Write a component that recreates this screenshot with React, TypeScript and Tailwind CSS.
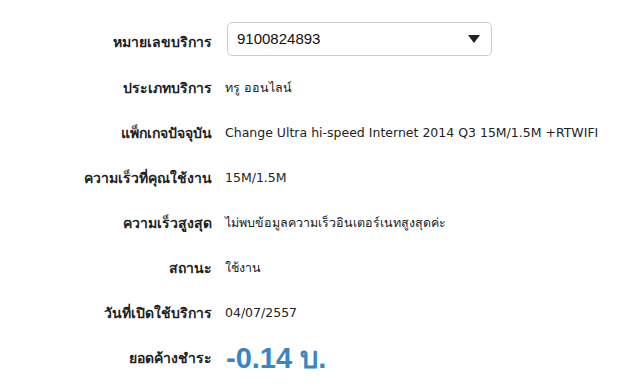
const rows: { label: string; value: string }[] = [
  { label: "ประเภทบริการ", value: "ทรู ออนไลน์" },
  { label: "แพ็กเกจปัจจุบัน", value: "Change Ultra hi-speed Internet 2014 Q3 15M/1.5M +RTWIFI" },
  { label: "ความเร็วที่คุณใช้งาน", value: "15M/1.5M" },
  { label: "ความเร็วสูงสุด", value: "ไม่พบข้อมูลความเร็วอินเตอร์เนทสูงสุดค่ะ" },
  { label: "สถานะ", value: "ใช้งาน" },
  { label: "วันที่เปิดใช้บริการ", value: "04/07/2557" },
];

export default function App() {
  return (
    <div className="w-[637px] h-[390px] bg-white text-[12.5px] text-[#222] font-['Tahoma','DejaVu_Sans',sans-serif] pt-[22px]">
      <div className="flex items-center h-[34px]">
        <div className="w-[212px] text-right font-bold text-[14px] pt-[6px]">หมายเลขบริการ</div>
        <div className="ml-[15px] w-[265px] h-[34px] border border-[#ccc] rounded-[5px] flex items-center justify-between pl-[9px] pr-[11px] font-['Liberation_Sans',sans-serif] text-[15px] text-[#111]">
          <span>9100824893</span>
          <svg width="12" height="8" viewBox="0 0 12 8">
            <path d="M0 0 H12 L6 8 Z" fill="#222" />
          </svg>
        </div>
      </div>
      <div className="mt-[10px]">
        {rows.map((r) => (
          <div key={r.label} className="flex items-center h-[45px]">
            <div className="w-[212px] text-right font-bold text-[14px]">{r.label}</div>
            <div className="ml-[13px]">{r.value}</div>
          </div>
        ))}
        <div className="flex items-center h-[44px]">
          <div className="w-[212px] text-right font-bold text-[14px]">ยอดค้างชำระ</div>
          <div className="ml-[14px] text-[29px] font-bold text-[#3a86c2] font-['Liberation_Sans',sans-serif] leading-none">
            -0.14 บ.
          </div>
        </div>
      </div>
    </div>
  );
}
